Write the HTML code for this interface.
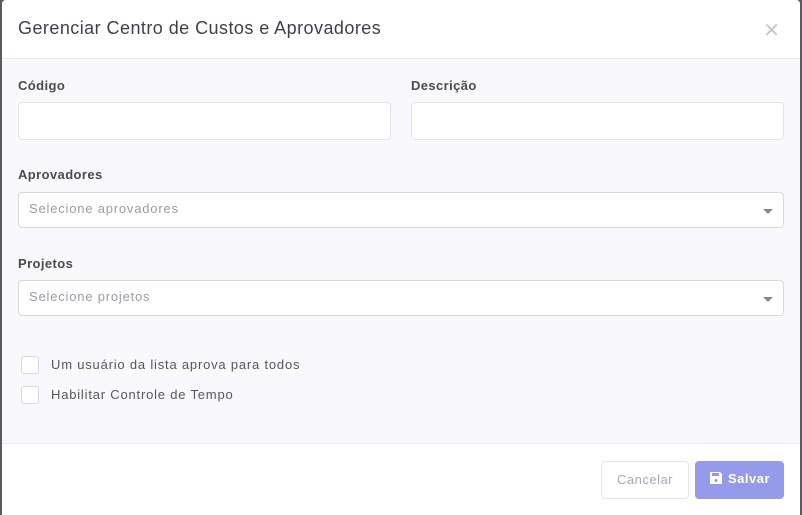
<!DOCTYPE html>
<html><head><meta charset="utf-8"><style>
*{box-sizing:border-box;margin:0;padding:0}
body{width:802px;height:515px;background:#5a5a60;font-family:"Liberation Sans",sans-serif;overflow:hidden;position:relative}
.modal{position:absolute;left:2px;top:0;width:798px;height:515px;background:#f9f9fb;border-radius:4px 4px 0 0;overflow:hidden}
.hdr{height:59px;background:#fff;border-bottom:1px solid #e6e6ee;position:relative}
.hdr h1{position:absolute;left:16px;top:18px;font-size:18px;font-weight:normal;color:#3f3f4c;letter-spacing:0.45px}
.x{position:absolute;right:20px;top:18px;font-size:20px;color:#c6c6d2}
.lbl{position:absolute;font-size:13px;font-weight:bold;color:#4a4a55;letter-spacing:0.4px}
.in{position:absolute;height:38px;background:#fff;border:1px solid #e2e2ea;border-radius:4px}
.sel{position:absolute;height:36px;background:#fff;border:1px solid #d8d8e0;border-radius:4px;font-size:13px;color:#9a9aa6;padding:8px 10px;letter-spacing:0.8px}
.sel:after{content:"";position:absolute;right:10px;top:16px;border:5px solid transparent;border-top:5px solid #888;border-bottom:0}
.cb{position:absolute;left:19px;width:18px;height:18px;border:1px solid #d8d8e0;border-radius:3px;background:#fff}
.ct{position:absolute;left:49px;font-size:13px;color:#55555f;letter-spacing:0.8px}
.ftr{position:absolute;left:0;top:443px;width:798px;height:72px;background:#fff;border-top:1px solid #ebebf2}
.btn{position:absolute;top:17px;height:38px;border-radius:4px;font-size:13px;line-height:36px;text-align:center;letter-spacing:0.5px}
</style></head><body>
<div class="modal">
 <div class="hdr"><h1>Gerenciar Centro de Custos e Aprovadores</h1><div class="x">✕</div></div>
 <div class="lbl" style="left:16px;top:78px">Código</div>
 <div class="lbl" style="left:409px;top:78px">Descrição</div>
 <div class="in" style="left:16px;top:102px;width:373px"></div>
 <div class="in" style="left:409px;top:102px;width:373px"></div>
 <div class="lbl" style="left:16px;top:167px">Aprovadores</div>
 <div class="sel" style="left:16px;top:192px;width:766px">Selecione aprovadores</div>
 <div class="lbl" style="left:16px;top:256px">Projetos</div>
 <div class="sel" style="left:16px;top:280px;width:766px">Selecione projetos</div>
 <div class="cb" style="top:356px"></div><div class="ct" style="top:357px">Um usuário da lista aprova para todos</div>
 <div class="cb" style="top:386px"></div><div class="ct" style="top:387px">Habilitar Controle de Tempo</div>
 <div class="ftr">
  <div class="btn" style="left:599px;width:88px;border:1px solid #e4e4f4;color:#a8a8b8">Cancelar</div>
  <div class="btn" style="left:693px;width:89px;background:#959bea;color:#fff;font-weight:600">
   <svg width="14" height="14" viewBox="0 0 14 14" style="vertical-align:-2px;margin-right:5px"><path d="M1 1h10l2 2v10H1z" fill="#fff"/><rect x="3" y="2" width="7" height="3" fill="#959bea"/><circle cx="7" cy="9.5" r="1.5" fill="#959bea"/></svg>Salvar</div>
 </div>
</div>
</body></html>
